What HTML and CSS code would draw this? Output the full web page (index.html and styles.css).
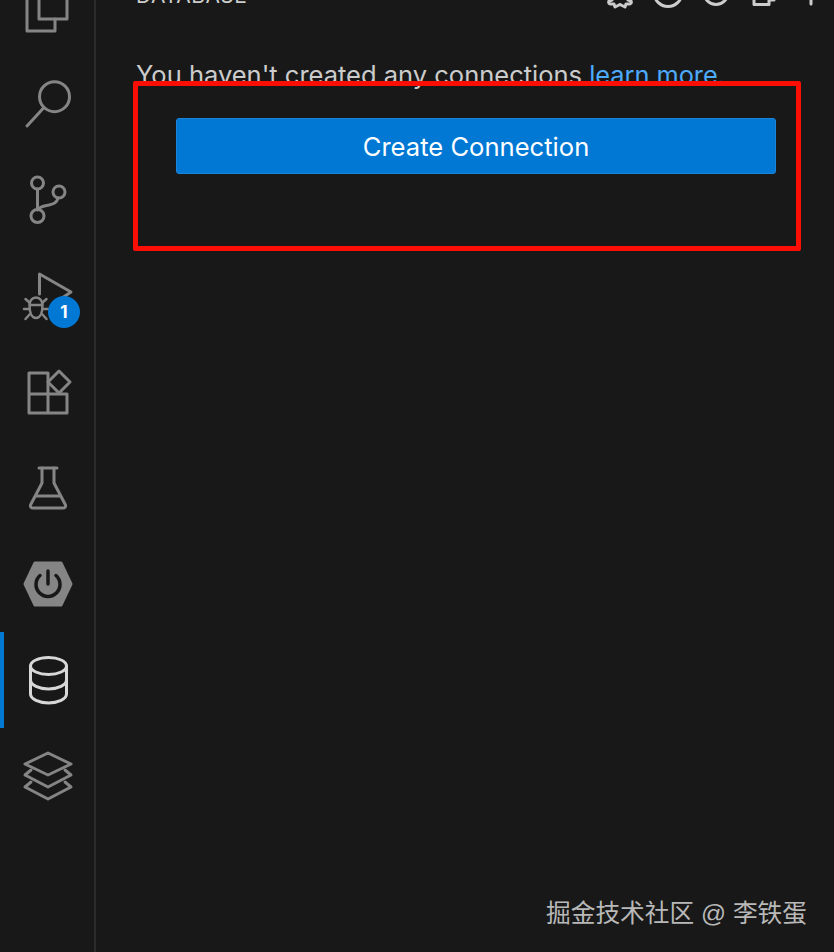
FILE: index.html
```html
<!DOCTYPE html>
<html lang="en">
<head>
<meta charset="utf-8">
<title>Database</title>
<link rel="stylesheet" href="styles.css">
</head>
<body>
<div class="workbench">
  <nav class="activity">
    <div class="item"><svg class="icon" viewBox="0 0 48 48"><path d="M15 11H3V47H31V35"/><path d="M15 1H35L43 9V35H15Z"/></svg></div>
    <div class="item"><svg class="icon" viewBox="0 0 48 48"><circle cx="30.5" cy="16.7" r="15"/><path d="M19.5 28L3 46"/></svg></div>
    <div class="item"><svg class="icon" viewBox="0 0 48 48"><circle cx="13.5" cy="7" r="6"/><circle cx="35" cy="16" r="6"/><circle cx="13.5" cy="40" r="6.5"/><path d="M13.5 13V33.5"/><path d="M34 22C33 27 29 28 25 29C20 30 16 30 13.5 34"/></svg></div>
    <div class="item debug">
      <svg class="icon" viewBox="0 0 48 48"><path d="M15.5 22V2L47 20L38 26"/><path class="thin" d="M5.5 33C5.5 29 8 25.5 12 25.5C16 25.5 18.5 29 18.5 33C18.5 41 16 46 12 46C8 46 5.5 41 5.5 33Z"/><path class="thin" d="M6 33H18M1.5 27L6 31M22.5 27L18 31M0 37H5M19 37H24M1.5 47L6 42M22.5 47L18 42"/></svg>
      <span class="badge">1</span>
    </div>
    <div class="item"><svg class="icon" viewBox="0 0 48 48"><path d="M5 5H24V45H5ZM5 26H43V45H24M43 26V45"/><path d="M35 3L46 14L35 25L24 14Z"/></svg></div>
    <div class="item"><svg class="icon" viewBox="0 0 48 48"><path d="M15 4H33"/><path d="M18 4V19L6.5 41Q6 44 9 44H39Q42 44 41.5 41L30 19V4"/><path d="M12 32H36"/></svg></div>
    <div class="item"><svg class="icon" viewBox="0 0 48 48"><path class="hex" d="M11 3H37L47 24L37 45H11L1 24Z"/><path class="power" d="M16 15.5A12 12 0 1 0 32 15.5"/><path class="power" d="M24 11V24"/></svg></div>
    <div class="item active"><svg class="icon" viewBox="0 0 48 48"><ellipse cx="24.5" cy="10" rx="18" ry="8.5"/><path d="M6.5 10V38C6.5 43 15 47 24.5 47C34 47 42.5 43 42.5 38V10"/><path d="M6.5 24C6.5 29 15 33 24.5 33C34 33 42.5 29 42.5 24"/></svg></div>
    <div class="item"><svg class="icon" viewBox="0 0 48 48"><path d="M24 1L47 12L24 23L1 12Z"/><path d="M7 18L1 23L24 35L47 23L41 18"/><path d="M7 30L1 35L24 47L47 35L41 30"/></svg></div>
  </nav>
  <main class="sidebar">
    <header class="title-row">
      <h2 class="title">DATABASE</h2>
      <div class="actions">
        <svg class="action" viewBox="0 0 32 32"><path d="M8 26L5 27Q4 29 6 30L10 30L11 33L15 31Q16 30 17 31L21 33L22 30L26 30Q28 29 27 27L24 26"/></svg>
        <svg class="action" viewBox="0 0 32 32"><circle cx="16" cy="18.5" r="14"/><path d="M16 18L22 12"/></svg>
        <svg class="action" viewBox="0 0 32 32"><circle cx="16" cy="18.5" r="12"/></svg>
        <svg class="action" viewBox="0 0 32 32"><path d="M6 18V30.5H21V26H26V18"/></svg>
        <svg class="action" viewBox="0 0 32 32"><path d="M15 12V30"/></svg>
      </div>
    </header>
    <p class="message">You haven't created any connections <a class="link" href="#">learn more.</a></p>
    <button class="primary" type="button">Create Connection</button>
  </main>
</div>
<div class="annotation"></div>
<div class="watermark">掘金技术社区 @ 李铁蛋</div>
</body>
</html>
```
FILE: styles.css
```css
* { box-sizing: border-box; }
html, body { margin: 0; height: 100%; }
body {
  position: relative;
  width: 834px;
  height: 952px;
  overflow: hidden;
  background: #181818;
  font-family: Inter, "Liberation Sans", sans-serif;
}
.workbench { display: flex; height: 952px; }
.activity {
  flex: 0 0 96px;
  margin-top: -40px;
  height: 992px;
  border-right: 2px solid #2b2b2b;
  display: flex;
  flex-direction: column;
}
.item {
  position: relative;
  flex: 0 0 96px;
  display: flex;
  align-items: center;
  justify-content: center;
}
.item.active { border-left: 4px solid #0078d4; padding-right: 4px; }
.item.active .icon { stroke: #d7d7d7; }
.icon {
  width: 48px;
  height: 48px;
  margin-left: 2px;
  overflow: visible;
  fill: none;
  stroke: #858585;
  stroke-width: 3;
  stroke-linejoin: round;
  stroke-linecap: round;
}
.icon .thin { stroke-width: 2.5; }
.hex { fill: #858585; stroke-width: 3; }
.power { stroke: #181818; stroke-width: 3.5; }
.badge {
  position: absolute;
  left: 48px;
  top: 48px;
  width: 32px;
  height: 32px;
  border-radius: 50%;
  background: #0078d4;
  color: #fff;
  font-size: 17px;
  font-weight: 700;
  display: flex;
  align-items: center;
  justify-content: center;
}
.sidebar { flex: 1; min-width: 0; padding-left: 40px; }
.title-row {
  display: flex;
  align-items: flex-end;
  justify-content: space-between;
  height: 6px;
}
.title {
  margin: 0;
  color: #cccccc;
  font-size: 21px;
  font-weight: 400;
  line-height: 26px;
  letter-spacing: 0.45px;
  flex: none;
  transform: translateY(3px);
}
.actions { display: flex; gap: 16px; margin-right: 6px; flex: none; height: 32px; }
.action {
  width: 32px;
  height: 32px;
  overflow: visible;
  fill: none;
  stroke: #cccccc;
  stroke-width: 3;
  stroke-linejoin: round;
  stroke-linecap: round;
}
.message {
  margin: 51px 0 0;
  color: #cccccc;
  font-size: 25.5px;
  line-height: 36px;
  white-space: nowrap;
}
.link { color: #4daafc; text-decoration: none; font-size: 25.3px; }
.primary {
  display: block;
  margin: 25px 0 0 40px;
  width: 600px;
  height: 56px;
  border: 1px solid #1a85d8;
  border-radius: 3px;
  background: #0078d4;
  color: #fff;
  font: 400 25.6px Inter, "Liberation Sans", sans-serif;
}
.annotation {
  position: absolute;
  left: 133px;
  top: 81px;
  width: 668px;
  height: 170px;
  border: 5px solid #fb0f05;
  border-radius: 2px;
}
.watermark {
  position: absolute;
  right: 27px;
  top: 896px;
  color: #b9b9b9;
  font-size: 24.7px;
  line-height: 36px;
  font-family: "Liberation Sans", "Noto Sans CJK SC", sans-serif;
}
```
